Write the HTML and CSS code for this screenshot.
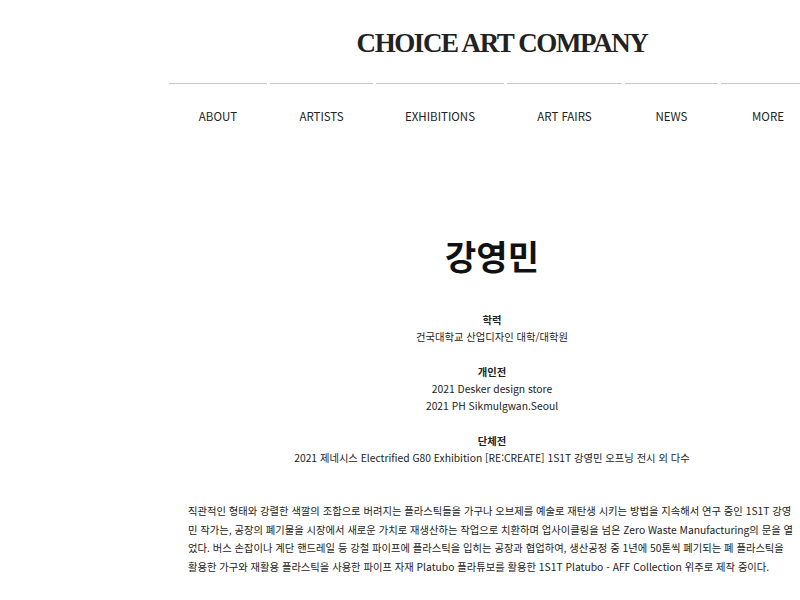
FILE: index.html
```html
<!DOCTYPE html>
<html lang="ko">
<head>
<meta charset="utf-8">
<title>강영민 - CHOICE ART COMPANY</title>
<link rel="stylesheet" href="styles.css">
</head>
<body>
<div class="page">
  <header class="header">
    <div class="logo">CHOICE ART COMPANY</div>
    <nav class="nav">
      <a class="nav-item nav-about" href="#">ABOUT</a>
      <a class="nav-item nav-artists" href="#">ARTISTS</a>
      <a class="nav-item nav-exhibitions" href="#">EXHIBITIONS</a>
      <a class="nav-item nav-fairs" href="#">ART FAIRS</a>
      <a class="nav-item nav-news" href="#">NEWS</a>
      <a class="nav-item nav-more" href="#">MORE</a>
    </nav>
  </header>
  <main class="artist">
    <h1 class="artist-name">강영민</h1>
    <section class="cv">
      <h2 class="cv-title">학력</h2>
      <p class="cv-line">건국대학교 산업디자인 대학/대학원</p>
    </section>
    <section class="cv">
      <h2 class="cv-title">개인전</h2>
      <p class="cv-line">2021 Desker design store</p>
      <p class="cv-line">2021 PH Sikmulgwan.Seoul</p>
    </section>
    <section class="cv">
      <h2 class="cv-title">단체전</h2>
      <p class="cv-line">2021 제네시스 Electrified G80 Exhibition [RE:CREATE] 1S1T 강영민 오프닝 전시 외 다수</p>
    </section>
    <p class="bio">직관적인 형태와 강렬한 색깔의 조합으로 버려지는 플라스틱들을 가구나 오브제를 예술로 재탄생 시키는 방법을 지속해서 연구 중인 1S1T 강영민 작가는, 공장의 폐기물을 시장에서 새로운 가치로 재생산하는 작업으로 치환하며 업사이클링을 넘은 Zero Waste Manufacturing의 문을 열었다. 버스 손잡이나 계단 핸드레일 등 강철 파이프에 플라스틱을 입히는 공장과 협업하여, 생산공정 중 1년에 50톤씩 폐기되는 폐 플라스틱을 활용한 가구와 재활용 플라스틱을 사용한 파이프 자재 Platubo 플라튜보를 활용한 1S1T Platubo - AFF Collection 위주로 제작 중이다.</p>
  </main>
</div>
</body>
</html>
```
FILE: styles.css
```css
html, body {
  margin: 0;
  padding: 0;
  overflow: hidden;
  background: #fff;
}
body {
  font-family: "Noto Sans CJK KR", "Open Sans", sans-serif;
  color: #222;
}
.page {
  width: 984px;
}
.header {
  display: flex;
  flex-direction: column;
  align-items: center;
}
.logo {
  font-family: "Liberation Serif", serif;
  font-weight: bold;
  font-size: 27px;
  line-height: 1;
  letter-spacing: -1.4px;
  color: #222;
  padding: 30px 0 0 20px;
  height: 53px;
}
.nav {
  display: flex;
  gap: 3px;
}
.nav-item {
  display: block;
  border-top: 1px solid #c8c8c8;
  padding: 24px 0 0;
  text-align: center;
  font-size: 11.5px;
  line-height: 17px;
  color: #222;
  text-decoration: none;
}
.nav-about { width: 98px; }
.nav-artists { width: 103px; }
.nav-exhibitions { width: 128px; }
.nav-fairs { width: 115px; }
.nav-news { width: 93px; }
.nav-more { width: 94px; }
.artist {
  display: flex;
  flex-direction: column;
  align-items: center;
}
.artist-name {
  margin: 111px 0 0;
  font-size: 34px;
  line-height: 40px;
  font-weight: bold;
  color: #111;
}
.cv {
  text-align: center;
  margin-top: 35px;
}
.cv + .cv {
  margin-top: 18px;
}
.cv-title {
  margin: 0;
  font-size: 10.3px;
  line-height: 17px;
  font-weight: bold;
}
.cv-line {
  margin: 0;
  font-size: 10.3px;
  line-height: 17px;
}
.bio {
  width: 608px;
  margin: 36px 0 0;
  font-size: 10.3px;
  line-height: 18.6px;
  word-break: break-all;
}
```
